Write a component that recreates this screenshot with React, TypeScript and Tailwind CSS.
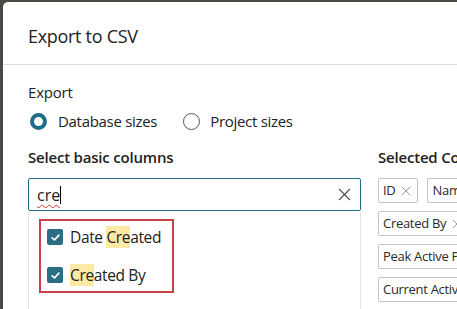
import React from 'react';

function XIcon({ className }: { className?: string }) {
  return (
    <svg viewBox="0 0 14 14" className={className} fill="none" stroke="currentColor" strokeWidth="1.4" strokeLinecap="round">
      <path d="M1.5 1.5 L12.5 12.5 M12.5 1.5 L1.5 12.5" />
    </svg>
  );
}

function Chip({ label }: { label: string }) {
  return (
    <div className="h-[25px] shrink-0 flex items-center gap-[6px] border border-[#c4c4c4] rounded-[2px] pl-[4px] pr-[6px] text-[13px] tracking-[-0.3px] text-[#2a2a2a] whitespace-nowrap">
      <span>{label}</span>
      <XIcon className="w-[10px] h-[10px] text-[#9a9a9a]" />
    </div>
  );
}

function Checked({ children }: { children: React.ReactNode }) {
  return (
    <div className="h-[32px] flex items-center pl-[6px]">
      <div className="w-4 h-4 rounded-[2px] bg-[#2a6e86] flex items-center justify-center">
        <svg viewBox="0 0 16 16" className="w-[11px] h-[11px]" fill="none" stroke="white" strokeWidth="2.4" strokeLinecap="round" strokeLinejoin="round">
          <path d="M3 8.5 L6.5 11.5 L13 4.5" />
        </svg>
      </div>
      <span className="ml-[7px] text-[15.5px] leading-[20px] tracking-[-0.35px]">{children}</span>
    </div>
  );
}

const hl = 'bg-[#fce9a6]';

export default function App() {
  return (
    <div className="w-[457px] h-[309px] overflow-hidden bg-[#4a4944] pl-[3px] pt-[2px] text-[#222]" style={{ fontFamily: '"Open Sans", "Noto Sans", sans-serif' }}>
      <div className="w-[800px] h-[400px] bg-white rounded-tl-[5px]">
        <div className="h-[63px] border-b border-[#dedede] pl-[25px] pt-[23px]">
          <h1 className="text-[18px] leading-[22px] tracking-[-0.3px]">Export to CSV</h1>
        </div>

        <div className="pl-[25px] pt-[17px]">
          <div className="text-[15px] leading-[20px] tracking-[-0.2px]">Export</div>

          <div className="mt-[9px] h-[20px] flex items-center text-[15px] tracking-[-0.3px]">
            <span className="w-[17px] h-[17px] rounded-full border-[4px] border-[#1f6e87] ml-[2px]" />
            <span className="ml-[11px]">Database sizes</span>
            <span className="ml-[26px] w-[17px] h-[17px] rounded-full border border-[#555]" />
            <span className="ml-[10px]">Project sizes</span>
          </div>

          <div className="mt-[16px] flex">
            <div className="w-[333px] shrink-0">
              <div className="text-[15px] leading-[20px] font-semibold tracking-[-0.2px]">Select basic columns</div>

              <div className="mt-[11px] h-[33px] border border-[#1f6e87] rounded-[2px] flex items-center pl-[8px] pr-[9px]">
                <span className="text-[16px] underline decoration-wavy decoration-[#e0302a] decoration-1 underline-offset-[3px]">cre</span>
                <span className="w-px h-[18px] bg-black" />
                <XIcon className="ml-auto w-[13px] h-[13px] text-[#444]" />
              </div>

              <div className="h-[120px] border-x border-[#e4e4e4] pt-[8px] pl-[10px]">
                <div className="w-[135px] border-2 border-[#c8404a] flex flex-col gap-[6px]">
                  <Checked>
                    Date <span className={hl}>Cre</span>ated
                  </Checked>
                  <Checked>
                    <span className={hl}>Cre</span>ated By
                  </Checked>
                </div>
              </div>
            </div>

            <div className="ml-[17px] flex-1">
              <div className="text-[15px] leading-[20px] font-semibold tracking-[-0.2px] whitespace-nowrap">Selected Columns</div>
              <div className="mt-[11px] flex flex-col gap-[8px]">
                <div className="flex gap-[9px]">
                  <Chip label="ID" />
                  <Chip label="Name" />
                </div>
                <div className="flex gap-[9px]">
                  <Chip label="Created By" />
                  <Chip label="Date Created" />
                </div>
                <div className="flex gap-[9px]">
                  <Chip label="Peak Active Projects" />
                </div>
                <div className="flex gap-[9px]">
                  <Chip label="Current Active Projects" />
                </div>
              </div>
            </div>
          </div>
        </div>
      </div>
    </div>
  );
}
